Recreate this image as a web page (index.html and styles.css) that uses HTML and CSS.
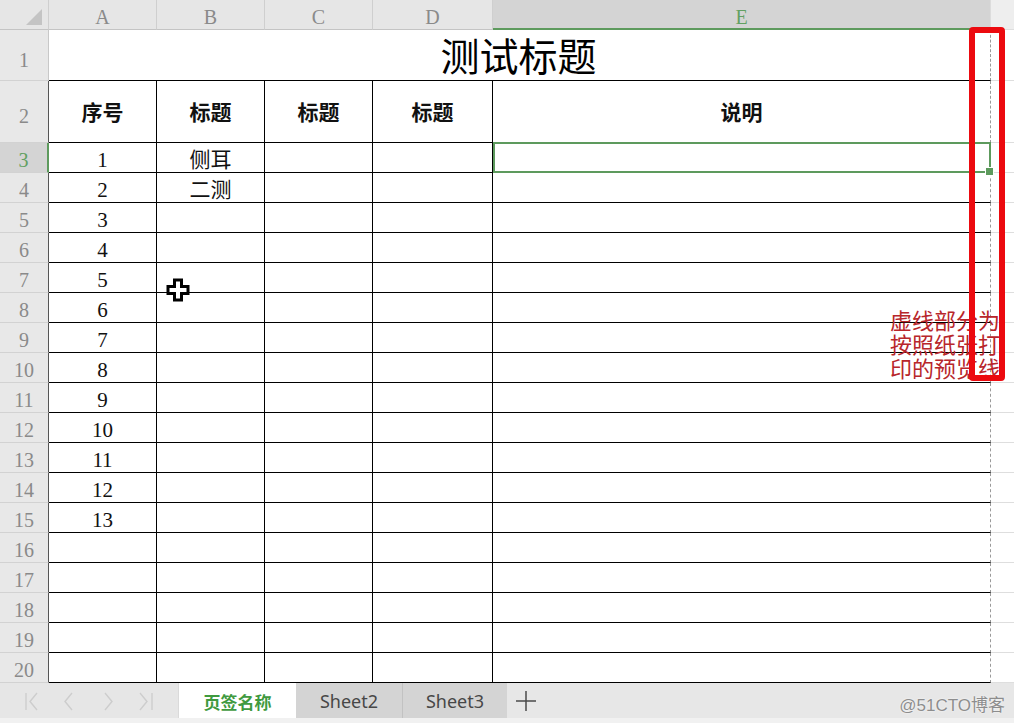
FILE: index.html
```html
<!DOCTYPE html>
<html lang="zh-CN">
<head>
<meta charset="utf-8">
<title>测试标题</title>
<link rel="stylesheet" href="styles.css">
</head>
<body>
<div class="app">
  <div class="sheet">
    <div class="row colhead">
      <div class="corner"><svg width="18" height="18" viewBox="0 0 18 18"><polygon points="17,1 17,17 1,17" fill="#c4c4c4"/></svg></div>
      <div class="ch">A</div>
      <div class="ch">B</div>
      <div class="ch">C</div>
      <div class="ch">D</div>
      <div class="ch sel">E</div>
      <div class="ch rest"></div>
    </div>
    <div class="row r1">
      <div class="rh first">1</div>
      <div class="title">测试标题</div>
      <div class="x"></div>
    </div>
    <div class="row r2">
      <div class="rh">2</div>
      <div class="c hd">序号</div>
      <div class="c hd">标题</div>
      <div class="c hd">标题</div>
      <div class="c hd">标题</div>
      <div class="c hd e">说明</div>
      <div class="x"></div>
    </div>
    <div class="row">
      <div class="rh sel">3</div>
      <div class="c">1</div><div class="c">侧耳</div><div class="c"></div><div class="c"></div><div class="c e cur"></div><div class="x"></div>
    </div>
    <div class="row">
      <div class="rh">4</div>
      <div class="c">2</div><div class="c">二测</div><div class="c"></div><div class="c"></div><div class="c e"></div><div class="x"></div>
    </div>
    <div class="row">
      <div class="rh">5</div>
      <div class="c">3</div><div class="c"></div><div class="c"></div><div class="c"></div><div class="c e"></div><div class="x"></div>
    </div>
    <div class="row">
      <div class="rh">6</div>
      <div class="c">4</div><div class="c"></div><div class="c"></div><div class="c"></div><div class="c e"></div><div class="x"></div>
    </div>
    <div class="row">
      <div class="rh">7</div>
      <div class="c">5</div><div class="c"></div><div class="c"></div><div class="c"></div><div class="c e"></div><div class="x"></div>
    </div>
    <div class="row">
      <div class="rh">8</div>
      <div class="c">6</div><div class="c"></div><div class="c"></div><div class="c"></div><div class="c e"></div><div class="x"></div>
    </div>
    <div class="row">
      <div class="rh">9</div>
      <div class="c">7</div><div class="c"></div><div class="c"></div><div class="c"></div><div class="c e"></div><div class="x"></div>
    </div>
    <div class="row">
      <div class="rh">10</div>
      <div class="c">8</div><div class="c"></div><div class="c"></div><div class="c"></div><div class="c e"></div><div class="x"></div>
    </div>
    <div class="row">
      <div class="rh">11</div>
      <div class="c">9</div><div class="c"></div><div class="c"></div><div class="c"></div><div class="c e"></div><div class="x"></div>
    </div>
    <div class="row">
      <div class="rh">12</div>
      <div class="c">10</div><div class="c"></div><div class="c"></div><div class="c"></div><div class="c e"></div><div class="x"></div>
    </div>
    <div class="row">
      <div class="rh">13</div>
      <div class="c">11</div><div class="c"></div><div class="c"></div><div class="c"></div><div class="c e"></div><div class="x"></div>
    </div>
    <div class="row">
      <div class="rh">14</div>
      <div class="c">12</div><div class="c"></div><div class="c"></div><div class="c"></div><div class="c e"></div><div class="x"></div>
    </div>
    <div class="row">
      <div class="rh">15</div>
      <div class="c">13</div><div class="c"></div><div class="c"></div><div class="c"></div><div class="c e"></div><div class="x"></div>
    </div>
    <div class="row">
      <div class="rh">16</div>
      <div class="c"></div><div class="c"></div><div class="c"></div><div class="c"></div><div class="c e"></div><div class="x"></div>
    </div>
    <div class="row">
      <div class="rh">17</div>
      <div class="c"></div><div class="c"></div><div class="c"></div><div class="c"></div><div class="c e"></div><div class="x"></div>
    </div>
    <div class="row">
      <div class="rh">18</div>
      <div class="c"></div><div class="c"></div><div class="c"></div><div class="c"></div><div class="c e"></div><div class="x"></div>
    </div>
    <div class="row">
      <div class="rh">19</div>
      <div class="c"></div><div class="c"></div><div class="c"></div><div class="c"></div><div class="c e"></div><div class="x"></div>
    </div>
    <div class="row">
      <div class="rh">20</div>
      <div class="c"></div><div class="c"></div><div class="c"></div><div class="c"></div><div class="c e"></div><div class="x"></div>
    </div>
  </div>

  <div class="tabbar">
    <div class="nav">
      <svg width="178" height="35" viewBox="0 0 178 35">
        <g fill="none" stroke="#cdcdcd" stroke-width="1.4">
          <line x1="26" y1="10" x2="26" y2="27"/>
          <polyline points="37,10 30,18.5 37,27"/>
          <polyline points="72,10 65,18.5 72,27"/>
          <polyline points="105,10 112,18.5 105,27"/>
          <polyline points="140,10 147,18.5 140,27"/>
          <line x1="152" y1="10" x2="152" y2="27"/>
        </g>
      </svg>
    </div>
    <div class="tab on">页签名称</div>
    <div class="tab">Sheet2</div>
    <div class="tab sep">Sheet3</div>
    <div class="plus"><svg width="22" height="22" viewBox="0 0 22 22"><g stroke="#4a4a4a" stroke-width="1.5"><line x1="11" y1="1" x2="11" y2="21"/><line x1="1" y1="11" x2="21" y2="11"/></g></svg></div>
    <div class="mark">@51CTO博客</div>
  </div>

  <div class="note"><div class="ln">虚线部分为</div><div class="ln">按照纸张打</div><div class="ln">印的预览线</div></div>
  <div class="redbox"></div>
  <svg class="cursor" width="24" height="24" viewBox="0 0 24 24"><polygon points="8.5,2 15.5,2 15.5,8.5 22,8.5 22,15.5 15.5,15.5 15.5,22 8.5,22 8.5,15.5 2,15.5 2,8.5 8.5,8.5" fill="#fff" stroke="#000" stroke-width="3" stroke-linejoin="miter"/></svg>
</div>
</body>
</html>
```
FILE: styles.css
```css
* { box-sizing: border-box; }
html, body { margin: 0; padding: 0; }
body {
  width: 1014px;
  height: 723px;
  overflow: hidden;
  background: #fff;
  font-family: "Liberation Serif", "Noto Sans CJK SC", serif;
}
.app { position: relative; width: 1014px; height: 723px; overflow: hidden; }

.sheet { display: flex; flex-direction: column; height: 683px; }
.row {
  display: grid;
  grid-template-columns: 49px 108px 108px 108px 120px 498px 1fr;
  grid-template-rows: 100%;
  flex: 0 0 30px;
  height: 30px;
  min-height: 0;
  line-height: 1;
}
.r1 { flex-basis: 51px; height: 51px; }
.r2 { flex-basis: 62px; height: 62px; }

/* column header */
.colhead { background: #e6e6e6; }
.corner {
  display: flex; align-items: flex-end; justify-content: flex-end;
  padding: 0 5px 3px 0;
  border-right: 1px solid #cfcfcf;
  border-bottom: 1px solid #c4c4c4;
}
.ch {
  display: flex; align-items: center; justify-content: center;
  padding-top: 4px;
  color: #8a8a8a;
  font-size: 20px;
  border-right: 1px solid #cfcfcf;
  border-bottom: 1px solid #c4c4c4;
}
.ch.sel {
  background: #d4d4d4;
  color: #62a062;
  border-right: 1px solid #dcdcdc;
  border-bottom: 2px solid #5d9a5d;
  padding-top: 5px;
}
.ch.rest { background: #eeeeee; border-right: 0; border-bottom: 1px solid #dedede; }

/* row header */
.rh {
  display: flex; align-items: center; justify-content: center;
  padding-top: 5px;
  background: #e8e8e8;
  color: #8a8a8a;
  font-size: 20px;
  border-right: 1px solid #555;
  border-bottom: 1px solid #d2d2d2;
}
.rh.first { border-right-color: #c8c8c8; padding-top: 10px; }
.r2 .rh { padding-top: 8px; }
.rh.sel {
  background: #d4d4d4;
  color: #62a062;
  border-right: 2px solid #5d9a5d;
}

/* cells */
.c {
  display: flex; align-items: center; justify-content: center;
  padding-top: 6px;
  color: #111;
  font-size: 21px;
  border-right: 1px solid #000;
  border-bottom: 1px solid #000;
  white-space: nowrap;
  min-height: 0;
}
.c.e { border-right: 1px dashed #9a9a9a; }
.c.hd { font-weight: 700; font-size: 21px; padding-top: 4px; }
.title {
  grid-column: 2 / 7;
  display: flex; align-items: center; justify-content: center;
  padding-top: 5px;
  padding-right: 2px;
  font-size: 39px;
  color: #000;
  border-bottom: 1px solid #000;
  border-right: 1px dashed #9a9a9a;
}
.x { border-bottom: 1px solid #dedede; }

.cur { position: relative; }
.cur::after {
  content: "";
  position: absolute;
  left: 0; top: -1px; right: -1px; bottom: -1px;
  border: 2px solid #5d9a5d;
}
.cur::before {
  content: "";
  position: absolute;
  right: -4px; bottom: -4px;
  width: 7px; height: 7px;
  background: #5d9a5d;
  border: 1px solid #fff;
  z-index: 2;
}

/* tab bar */
.tabbar {
  display: flex;
  align-items: flex-start;
  height: 40px;
  background: #e7e7e7;
  border-bottom: 5px solid #f1f1f1;
  font-family: "Noto Sans", "Noto Sans CJK SC", sans-serif;
}
.nav {
  width: 179px; height: 35px;
  background: #e6e6e6;
  border-right: 1px solid #dadada;
}
.nav svg { display: block; }
.tab {
  width: 106px; height: 35px;
  display: flex; align-items: center; justify-content: center;
  background: #d4d4d4;
  color: #474747;
  font-size: 18px;
  padding-top: 1px;
}
.tab.on {
  width: 117px;
  background: #fff;
  color: #3f9a3f;
  font-weight: 700;
  font-family: "Noto Sans CJK SC", sans-serif;
  font-size: 17px;
}
.tab.sep { width: 105px; border-left: 1px solid #c2c2c2; }
.plus { width: 36px; height: 35px; display: flex; align-items: center; justify-content: center; padding-left: 2px; }
.plus svg { display: block; }
.mark {
  margin-left: auto;
  padding: 8px 9px 0 0;
  font-size: 17px;
  color: #8d8d8d;
  font-family: "Liberation Sans", "Noto Sans CJK SC", sans-serif;
  text-shadow: 0 0 2px #fff;
}

/* overlays */
.note {
  position: absolute;
  left: 890px; top: 307px;
  font-family: "Noto Sans CJK SC", sans-serif;
  font-size: 22px;
  color: #b8262b;
  white-space: nowrap;
}
.ln { height: 24px; line-height: 24px; }
.redbox {
  position: absolute;
  left: 969px; top: 27px;
  width: 36px; height: 354px;
  border: 6px solid #ec0a0f;
  border-radius: 4px;
}
.cursor { position: absolute; left: 166px; top: 278px; }
```
